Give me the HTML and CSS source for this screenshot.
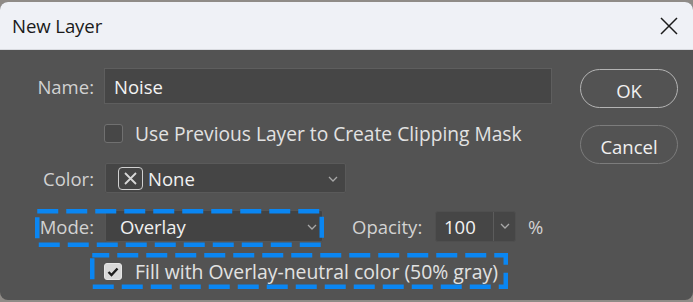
FILE: index.html
```html
<!DOCTYPE html>
<html lang="en">
<head>
<meta charset="utf-8">
<title>New Layer</title>
<link rel="stylesheet" href="styles.css">
</head>
<body>
<div class="dialog">
  <div class="titlebar">
    <span class="title">New Layer</span>
    <span class="close" aria-label="Close">
      <svg width="18" height="18" viewBox="0 0 18 18"><path d="M1 1 L17 17 M17 1 L1 17" stroke="#1b1b1b" stroke-width="1.5" fill="none"/></svg>
    </span>
  </div>
  <div class="content">
    <div class="form">
      <div class="row row-name">
        <span class="label">Name:</span>
        <div class="field name-input">Noise</div>
      </div>
      <div class="row row-clip">
        <span class="checkbox"></span>
        <span class="check-text">Use Previous Layer to Create Clipping Mask</span>
      </div>
      <div class="row row-color">
        <span class="label">Color:</span>
        <div class="field select color-select">
          <span class="none-icon">
            <svg width="13" height="13" viewBox="0 0 13 13"><path d="M1 1 L12 12 M12 1 L1 12" stroke="#d8d8d8" stroke-width="1.8" fill="none"/></svg>
          </span>
          <span class="select-text">None</span>
          <svg class="chev" width="10" height="6" viewBox="0 0 10 6"><path d="M1 1 L5 5 L9 1" stroke="#a8a8a8" stroke-width="1.3" fill="none"/></svg>
        </div>
      </div>
      <div class="row row-mode">
        <span class="label">Mode:</span>
        <div class="field select mode-select">
          <span class="select-text">Overlay</span>
          <svg class="chev" width="10" height="6" viewBox="0 0 10 6"><path d="M1 1 L5 5 L9 1" stroke="#a8a8a8" stroke-width="1.3" fill="none"/></svg>
        </div>
        <span class="label opacity-label">Opacity:</span>
        <div class="opacity">
          <span class="opacity-value">100</span>
          <span class="opacity-btn">
            <svg width="10" height="6" viewBox="0 0 10 6"><path d="M1 1 L5 5 L9 1" stroke="#a8a8a8" stroke-width="1.3" fill="none"/></svg>
          </span>
        </div>
        <span class="pct">%</span>
      </div>
      <div class="row row-fill">
        <span class="checkbox checked">
          <svg width="12" height="10" viewBox="0 0 12 10"><path d="M1.5 5 L4.5 8 L10.5 1.5" stroke="#1e1e1e" stroke-width="2.4" fill="none"/></svg>
        </span>
        <span class="check-text">Fill with Overlay-neutral color (50% gray)</span>
      </div>
    </div>
    <div class="buttons">
      <span class="btn btn-ok">OK</span>
      <span class="btn btn-cancel">Cancel</span>
    </div>
    <svg class="highlight hl-mode" width="289" height="38" viewBox="0 0 289 38">
      <rect x="2.25" y="2.25" width="284.5" height="33.5" fill="none" stroke="#0a86f2" stroke-width="4.5" stroke-dasharray="21 8"/>
    </svg>
    <svg class="highlight hl-fill" width="418" height="36" viewBox="0 0 418 36">
      <rect x="2.25" y="2.25" width="413.5" height="31.5" fill="none" stroke="#0a86f2" stroke-width="4.5" stroke-dasharray="21 8" stroke-dashoffset="4"/>
    </svg>
  </div>
</div>
</body>
</html>
```
FILE: styles.css
```css
html, body {
  margin: 0;
  padding: 0;
}
body {
  width: 693px;
  height: 302px;
  overflow: hidden;
  background: #8f8b87;
  font-family: "Open Sans", "Noto Sans", sans-serif;
}
.dialog {
  margin-top: 2px;
  height: 298px;
  border-radius: 8px;
  overflow: hidden;
  background: #535353;
  display: flex;
  flex-direction: column;
}
.titlebar {
  height: 47px;
  flex: none;
  background: #eff1f6;
  display: flex;
  align-items: center;
  justify-content: space-between;
  padding: 0 14px 0 12px;
  border-bottom: 1px solid #d9dbe0;
}
.title {
  font-size: 18.6px;
  color: #1a1a1a;
  letter-spacing: -0.1px;
}
.close {
  display: flex;
  width: 18px;
  height: 18px;
  margin-right: 1px;
}
.content {
  position: relative;
  flex: 1;
  display: flex;
  padding: 18px 15px 0 0;
}
.form {
  width: 552px;
  display: flex;
  flex-direction: column;
}
.row {
  display: flex;
  align-items: center;
}
.label {
  width: 94px;
  flex: none;
  text-align: right;
  font-size: 18.5px;
  color: #d2d2d2;
  margin-right: 10px;
}
.field {
  box-sizing: border-box;
  display: flex;
  align-items: center;
  font-size: 18.5px;
  color: #f3f3f3;
}
.row-name { height: 36px; }
.name-input {
  width: 448px;
  height: 36px;
  background: #464646;
  border: 1px solid #5e5e5e;
  padding-left: 9px;
}
.row-clip {
  height: 19px;
  margin-top: 20px;
  padding-left: 104px;
}
.checkbox {
  box-sizing: border-box;
  width: 19px;
  height: 19px;
  flex: none;
  border: 1px solid #707070;
  border-radius: 3px;
  background: #474747;
  display: flex;
  align-items: center;
  justify-content: center;
  margin-right: 12px;
}
.checkbox.checked {
  width: 18px;
  height: 17px;
  background: #d9d9d9;
  border-color: #e6e6e6;
  margin-right: 13px;
}
.check-text {
  font-size: 19.2px;
  color: #e2e2e2;
  white-space: nowrap;
}
.row-fill .check-text {
  font-size: 19.4px;
}
.row-color {
  height: 30px;
  margin-top: 20px;
}
.select {
  position: relative;
  background: #454545;
  border: 1px solid #5a5a5a;
  border-radius: 2px;
}
.color-select {
  width: 241px;
  height: 30px;
  padding-left: 12px;
  margin-left: 1px;
}
.none-icon {
  box-sizing: border-box;
  width: 25px;
  height: 23px;
  border: 1.8px solid #d0d0d0;
  border-radius: 4px;
  display: flex;
  align-items: center;
  justify-content: center;
  margin-right: 5px;
}
.select-text { color: #f1f1f1; }
.chev {
  position: absolute;
  right: 7px;
  top: 50%;
  margin-top: -2px;
}
.row-mode {
  height: 32px;
  margin-top: 17px;
}
.mode-select {
  width: 218px;
  height: 32px;
  padding-left: 14px;
  background: #434343;
  border-color: #555555;
  margin-left: 1px;
}
.mode-select .chev { right: 5px; }
.opacity-label {
  width: 74px;
  text-align: left;
  margin-left: 29px;
  margin-right: 9px;
}
.opacity {
  box-sizing: border-box;
  width: 81px;
  height: 31px;
  display: flex;
  background: #464646;
  border: 1px solid #4f4f4f;
  border-radius: 3px;
}
.opacity-value {
  width: 58px;
  box-sizing: border-box;
  padding-left: 8px;
  font-size: 18.5px;
  color: #f3f3f3;
  display: flex;
  align-items: center;
  border-right: 1px solid #5c5c5c;
}
.opacity-btn {
  flex: 1;
  display: flex;
  align-items: center;
  justify-content: center;
}
.pct {
  margin-left: 12px;
  font-size: 18.5px;
  color: #d2d2d2;
}
.row-fill {
  height: 17px;
  margin-top: 21px;
  padding-left: 104px;
}
.buttons {
  margin-left: 28px;
  display: flex;
  flex-direction: column;
  gap: 17px;
}
.btn {
  box-sizing: border-box;
  width: 98px;
  height: 39px;
  border-radius: 20px;
  display: flex;
  align-items: center;
  justify-content: center;
  font-size: 18.5px;
  color: #f0f0f0;
  padding-top: 3px;
}
.btn-ok {
  margin-top: 1px;
  border: 1.5px solid #b4b4b4;
}
.btn-cancel {
  border: 1.5px solid #7c7c7c;
}
.highlight {
  position: absolute;
}
.hl-mode {
  left: 35px;
  top: 159px;
}
.hl-fill {
  left: 90px;
  top: 203px;
}
```
